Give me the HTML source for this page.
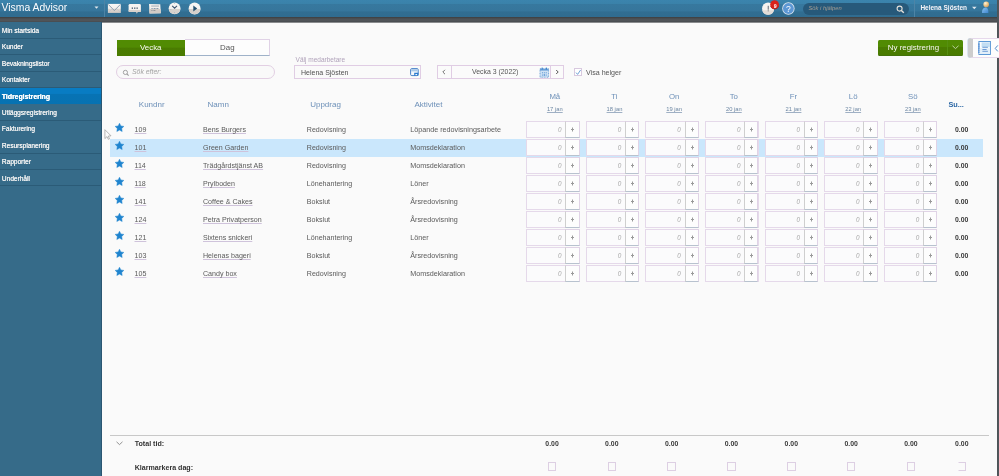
<!DOCTYPE html>
<html><head><meta charset="utf-8">
<style>
*{box-sizing:border-box;margin:0;padding:0}
html,body{width:999px;height:476px;overflow:hidden;background:#fafafa;font-family:"Liberation Sans",sans-serif;position:relative}
.abs{position:absolute}
#hdr{left:0;top:0;width:999px;height:17px;background:linear-gradient(#3b84ad 0,#3a82aa 3.5px,#37789e 4px,#36769c 11px,#316e92 11.8px,#306c90 17px)}
#band{left:0;top:17px;width:999px;height:5.5px;background:linear-gradient(#3f4143 0,#434547 1px,#4e5256 1.8px,#505458 3.5px,#4a4e52 4.5px,#474b4f 5px,#8a8c8e 5.5px)}
#side{left:0;top:22px;width:102px;height:454px;background:#366b89}
#side .it{position:absolute;left:0;width:102px;height:16.4px;color:#f2f2f2;font-size:6.5px;font-weight:normal;text-shadow:0.3px 0 0 #f2f2f2;letter-spacing:0.02px;line-height:18px;padding-left:1.8px;white-space:nowrap}
#side .it.act{background:linear-gradient(#087cc3 0,#087cc3 34%,#0773b4 38%,#0772b2 100%);font-size:6.8px;font-weight:bold;text-shadow:0.25px 0 0 #fff;color:#fff}
#rborder{left:996.5px;top:0;width:3px;height:476px;background:linear-gradient(90deg,#4c5256,#52585c 60%,#585e62)}
.t{position:absolute;white-space:nowrap;line-height:1}
body{will-change:transform}
.seg{position:absolute;top:39.5px;height:16px;font-size:7.6px;line-height:16px;text-align:center}
.lnk{color:#5c7cab;text-decoration:underline;text-decoration-skip-ink:none;text-decoration-color:#cfc3db}
.cell{position:absolute;font-size:7.1px;color:#5a5a5a;white-space:nowrap;line-height:1}
.dh{position:absolute;font-size:7.8px;color:#6d90b8;text-align:center;width:40px;line-height:1}
.dd{position:absolute;font-size:5.8px;color:#6d87a3;text-align:center;width:40px;line-height:1;text-decoration:underline;text-decoration-skip-ink:none;text-decoration-color:#9fb0c4}
.box{position:absolute;width:53.5px;height:16.6px;border:1px solid #e5d9ea;background:#fbfbfc}
.box .z{position:absolute;right:17.1px;top:4.6px;font-size:6.3px;font-style:italic;color:#a9a9a9;line-height:1}
.box .p{position:absolute;left:38.2px;top:-1px;width:14.3px;height:16.6px;border:1px solid #e0d3e6;border-left:1px solid #cfcfcf;border-bottom:1px solid #b8c2cf;background:#fdfdfd;font-size:7.5px;color:#666;text-align:center;line-height:15.5px}
.sum{position:absolute;font-size:6.9px;font-weight:bold;color:#3a3a3a;line-height:1;white-space:nowrap}
.ck{position:absolute;width:8.5px;height:8.5px;border:1px solid #ddcfe3;background:#fafafa}
</style></head><body>

<div id="hdr" class="abs">
  <div class="t" style="left:1.5px;top:2.9px;font-size:10.4px;color:#fafcfe">Visma Advisor</div>
  <svg class="abs" style="left:93px;top:5px" width="7" height="5"><path d="M1.5 1.5 L5.5 1.5 L3.5 3.8Z" fill="#dfe7ee"/></svg>
  <div class="abs" style="left:104px;top:0;width:1px;height:17px;background:#4d84a6"></div>
  <svg class="abs" style="left:106px;top:2px" width="100" height="14">
    <defs><linearGradient id="gEnv" x1="0" y1="0" x2="0" y2="1"><stop offset="0" stop-color="#fbf8f6"/><stop offset="0.5" stop-color="#f3efec"/><stop offset="0.55" stop-color="#ddd6d0"/><stop offset="1" stop-color="#d3cbc4"/></linearGradient></defs>
    <rect x="1.9" y="1.9" width="12.9" height="9" fill="url(#gEnv)"/>
    <path d="M2.3 2.4 L8.35 8.6 L14.4 2.4" fill="none" stroke="#8296ac" stroke-width="0.9"/>
    <path d="M2.3 10.6 L6.3 6.6 M14.4 10.6 L10.4 6.6" fill="none" stroke="#b9c3ce" stroke-width="0.6"/>
    <rect x="22.6" y="1.9" width="12.3" height="8.1" rx="1.4" fill="#f6f3f1"/>
    <rect x="22.6" y="7.9" width="12.3" height="2.1" fill="#d8d1cb"/>
    <path d="M30 9.9 L30.8 11.8 L31.8 9.9Z" fill="#d0c9c3"/>
    <rect x="25.7" y="5.5" width="1.3" height="1.3" fill="#3e5268"/>
    <rect x="28.1" y="5.5" width="1.3" height="1.3" fill="#3e5268"/>
    <rect x="30.5" y="5.5" width="1.3" height="1.3" fill="#3e5268"/>
    <path d="M43 1.9 L54.3 2.2 L54.8 11.3 L43.5 11.5Z" fill="#f3f0ed"/>
    <path d="M43.2 7 L54.6 6.9 L54.8 11.3 L43.5 11.5Z" fill="#d2cbc5"/>
    <rect x="45.2" y="3.6" width="7.8" height="0.9" fill="#9aa4b0"/>
    <rect x="45.4" y="6" width="1.3" height="0.9" fill="#7e8fa2"/>
    <rect x="47.6" y="6" width="2" height="0.9" fill="#7e8fa2"/>
    <rect x="50.4" y="6" width="2" height="0.9" fill="#7e8fa2"/>
    <rect x="45.4" y="8.1" width="1.1" height="0.9" fill="#8b8f96"/>
    <rect x="47.4" y="8.1" width="2" height="0.9" fill="#8b8f96"/>
    <circle cx="68.6" cy="6.3" r="5.9" fill="#f6f4f2"/>
    <path d="M62.76 7 A5.9 5.9 0 0 0 74.44 7Z" fill="#d6d1cc"/>
    <path d="M66.2 3.9 L68.6 6.2 L71 3.9" fill="none" stroke="#3d5570" stroke-width="1.1"/>
    <circle cx="68.6" cy="1.4" r="0.45" fill="#8a96a3"/>
    <circle cx="64.9" cy="7.6" r="0.4" fill="#8a9cb8"/>
    <circle cx="68.6" cy="10.4" r="0.4" fill="#8a9cb8"/>
    <circle cx="88.6" cy="6.5" r="5.95" fill="#f7f5f3"/>
    <path d="M82.7 7 A5.95 5.95 0 0 0 94.5 7Z" fill="#d4cfca"/>
    <path d="M87.3 3.4 L91.2 6.4 L87.3 9.4Z" fill="#24506f"/>
  </svg>
  <svg class="abs" style="left:760px;top:0" width="40" height="17">
    <circle cx="8.1" cy="8.6" r="6.1" fill="#f5f2f0"/>
    <path d="M2.2 10.2 A6.1 6.1 0 0 0 14 10.2Z" fill="#e2dcd7"/>
    <rect x="7.75" y="5.8" width="0.9" height="3.9" fill="#4e5a66"/>
    <rect x="7.75" y="10.4" width="0.9" height="0.9" fill="#4e5a66"/>
    <circle cx="14.6" cy="4.6" r="4.4" fill="#d8221c"/>
    <path d="M10.5 6.2 A4.4 4.4 0 0 0 18.7 6.2" fill="none" stroke="#b31a14" stroke-width="0.8"/>
    <text x="15.3" y="7.6" font-size="5.2" font-weight="bold" text-anchor="middle" fill="#fff" font-family="Liberation Sans">9</text>
    <circle cx="28.4" cy="8.5" r="6.2" fill="#dde6ee"/>
    <circle cx="28.4" cy="8.5" r="5.4" fill="#5c97d4"/>
    <text x="28.5" y="12.4" font-size="8.6" text-anchor="middle" fill="#fff" font-family="Liberation Sans">?</text>
  </svg>
  <div class="abs" style="left:803.2px;top:3.2px;width:106px;height:11.4px;border-radius:6px;background:#27597a"></div>
  <div class="t" style="left:808.5px;top:6.2px;font-size:5.8px;color:#a39c92;font-style:italic">Sök i hjälpen</div>
  <svg class="abs" style="left:896px;top:4.5px" width="9" height="9"><circle cx="3.6" cy="3.6" r="2.5" fill="none" stroke="#e6e2dc" stroke-width="1.1"/><path d="M5.4 5.4 L7.8 7.8" stroke="#e6e2dc" stroke-width="1.4"/></svg>
  <div class="abs" style="left:914px;top:0;width:1px;height:17px;background:#4d84a6"></div>
  <div class="t" style="left:920.4px;top:5.1px;font-size:6.5px;font-weight:bold;color:#f6f4f8">Helena Sjösten</div>
  <svg class="abs" style="left:971px;top:6px" width="7" height="4"><path d="M1 0.8 L5.6 0.8 L3.3 3.2Z" fill="#dfe7ee"/></svg>
  <svg class="abs" style="left:980px;top:0" width="12" height="15">
    <defs><radialGradient id="gHead" cx="0.35" cy="0.3" r="0.8"><stop offset="0" stop-color="#fff2d8"/><stop offset="0.5" stop-color="#f0c88a"/><stop offset="1" stop-color="#c89458"/></radialGradient>
    <linearGradient id="gBody" x1="0" y1="0" x2="1" y2="1"><stop offset="0" stop-color="#8cc4f0"/><stop offset="1" stop-color="#3f86d0"/></linearGradient></defs>
    <circle cx="6.2" cy="4.4" r="2.8" fill="url(#gHead)"/>
    <path d="M2 13 Q1.8 7.6 5.6 7.4 Q8.6 7.4 8.4 13Z" fill="url(#gBody)"/>
  </svg>
</div>
<div id="band" class="abs"></div>

<div id="side" class="abs">
<div class="abs" style="left:0;top:15.80px;width:102px;height:1px;background:#2b5b77"></div>
<div class="abs" style="left:0;top:32.20px;width:102px;height:1px;background:#2b5b77"></div>
<div class="abs" style="left:0;top:48.60px;width:102px;height:1px;background:#2b5b77"></div>
<div class="abs" style="left:0;top:65.00px;width:102px;height:1px;background:#2b5b77"></div>
<div class="abs" style="left:0;top:81.40px;width:102px;height:1px;background:#2b5b77"></div>
<div class="abs" style="left:0;top:97.80px;width:102px;height:1px;background:#2b5b77"></div>
<div class="abs" style="left:0;top:130.60px;width:102px;height:1px;background:#2b5b77"></div>
<div class="abs" style="left:0;top:147.00px;width:102px;height:1px;background:#2b5b77"></div>
<div class="abs" style="left:0;top:163.40px;width:102px;height:1px;background:#2b5b77"></div>
<div class="it" style="top:0.00px">Min startsida</div>
<div class="it" style="top:16.40px">Kunder</div>
<div class="it" style="top:32.80px">Bevakningslistor</div>
<div class="it" style="top:49.20px">Kontakter</div>
<div class="it act" style="top:66.00px">Tidregistrering</div>
<div class="it" style="top:82.00px">Utläggsregistrering</div>
<div class="it" style="top:98.40px">Fakturering</div>
<div class="it" style="top:114.80px">Resursplanering</div>
<div class="it" style="top:131.20px">Rapporter</div>
<div class="it" style="top:147.60px">Underhåll</div>
</div>
<div class="seg" style="left:116.5px;width:68.5px;background:linear-gradient(#518b03 0,#518b03 45%,#4a7c01 50%,#497b00 100%);color:#fbfbf6;font-size:7.9px">Vecka</div>
<div class="seg" style="left:185px;width:84.6px;top:39.2px;height:16.5px;background:#fdfdfd;border:1px solid #e0d2e6;border-left:none;border-bottom:1px solid #9fb2c9;color:#555;font-size:7.9px;line-height:16.2px;padding-left:1px">Dag</div>
<div class="abs" style="left:116px;top:65.3px;width:159px;height:13.6px;border:1px solid #e2cfe3;border-radius:7px;background:#f9f9f9"></div>
<svg class="abs" style="left:121.5px;top:68.5px" width="8" height="8"><circle cx="3.4" cy="3.4" r="2.1" fill="none" stroke="#999" stroke-width="0.9"/><path d="M4.9 4.9 L6.6 6.6" stroke="#999" stroke-width="1.1"/></svg>
<div class="t" style="left:132px;top:68.8px;font-size:6.9px;font-style:italic;color:#a4a4a4">Sök efter:</div>
<div class="t" style="left:295.6px;top:57.4px;font-size:6.5px;color:#b0a2ba">Välj medarbetare</div>
<div class="abs" style="left:294.2px;top:65.1px;width:127px;height:13.6px;border:1px solid #e0cde4;background:#fafafa"></div>
<div class="t" style="left:301px;top:69.2px;font-size:7px;color:#505050">Helena Sjösten</div>
<svg class="abs" style="left:409px;top:67px" width="11" height="10"><rect x="1.6" y="1.6" width="7.6" height="7" rx="1.2" fill="#f4f8fc" stroke="#4a82c8" stroke-width="1"/><rect x="2.2" y="2.2" width="6.4" height="2.2" fill="#a9c8e8"/><path d="M5.8 8.8 V6.3 H8.8 V8.8" fill="none" stroke="#2a7ad0" stroke-width="1.2"/></svg>
<div class="abs" style="left:437.4px;top:65px;width:126.2px;height:13.6px;border:1px solid #e0cde4;background:#fbfbfb"></div>
<div class="abs" style="left:451.4px;top:65px;width:1px;height:13.6px;background:#e0cde4"></div>
<div class="abs" style="left:550px;top:65px;width:1px;height:13.6px;background:#e0cde4"></div>
<svg class="abs" style="left:440px;top:68px" width="8" height="8"><path d="M5 1.8 L2.8 4 L5 6.2" fill="none" stroke="#666" stroke-width="0.9"/></svg>
<svg class="abs" style="left:553px;top:68px" width="8" height="8"><path d="M3.2 2 L5.2 4 L3.2 6" fill="none" stroke="#555" stroke-width="1"/></svg>
<div class="t" style="left:472px;top:69.3px;font-size:6.9px;color:#555">Vecka 3 (2022)</div>
<svg class="abs" style="left:538.5px;top:66.5px" width="11" height="11"><rect x="1" y="1.8" width="8.6" height="8.4" fill="#cfe2f4" stroke="#5b95d2" stroke-width="0.8" stroke-dasharray="1 0.6"/><rect x="1" y="1.8" width="8.6" height="1.8" fill="#6aa0d8"/><rect x="2.6" y="0.6" width="1.2" height="2" fill="#3f84cc"/><rect x="6.8" y="0.6" width="1.2" height="2" fill="#3f84cc"/><circle cx="3.4" cy="5.8" r="0.55" fill="#3f84cc"/><circle cx="5.3" cy="5.8" r="0.55" fill="#3f84cc"/><circle cx="7.2" cy="5.8" r="0.55" fill="#3f84cc"/><circle cx="3.4" cy="8" r="0.55" fill="#3f84cc"/><circle cx="5.3" cy="8" r="0.7" fill="#2a78c8"/><circle cx="7.2" cy="8" r="0.55" fill="#3f84cc"/></svg>
<div class="abs" style="left:574px;top:68.4px;width:7.6px;height:7.6px;border:1px solid #d8c9df;background:#fff"></div>
<svg class="abs" style="left:574px;top:68px" width="9" height="9"><path d="M2 4.6 L3.6 6.4 L6.6 2" fill="none" stroke="#4f8ccc" stroke-width="0.8"/></svg>
<div class="t" style="left:586px;top:69.6px;font-size:7.1px;color:#555">Visa helger</div>
<div class="abs" style="left:878.4px;top:39.8px;width:84.6px;height:15.9px;border-radius:1.5px;background:linear-gradient(#518b03 0,#518b03 45%,#4a7c01 50%,#497b00 100%);border-bottom:1px solid #44720a"></div>
<div class="abs" style="left:946.8px;top:40px;width:1px;height:15px;background:#568f12"></div>
<div class="t" style="left:887.8px;top:44.4px;font-size:7.9px;color:#f8f8f2">Ny registrering</div>
<svg class="abs" style="left:951px;top:44px" width="9" height="7"><path d="M1.5 1.8 L4.5 4.6 L7.5 1.8" fill="none" stroke="#d8e6c8" stroke-width="0.8"/></svg>
<div class="t" style="left:138.8px;top:101px;font-size:8px;color:#6d90b8">Kundnr</div>
<div class="t" style="left:207.6px;top:101px;font-size:8px;color:#6d90b8">Namn</div>
<div class="t" style="left:310.2px;top:101px;font-size:8px;color:#6d90b8">Uppdrag</div>
<div class="t" style="left:414.4px;top:101px;font-size:8px;color:#6d90b8">Aktivitet</div>
<div class="dh" style="left:534.80px;top:92.5px">Må</div>
<div class="dd" style="left:534.80px;top:107px">17 jan</div>
<div class="dh" style="left:594.48px;top:92.5px">Ti</div>
<div class="dd" style="left:594.48px;top:107px">18 jan</div>
<div class="dh" style="left:654.16px;top:92.5px">On</div>
<div class="dd" style="left:654.16px;top:107px">19 jan</div>
<div class="dh" style="left:713.84px;top:92.5px">To</div>
<div class="dd" style="left:713.84px;top:107px">20 jan</div>
<div class="dh" style="left:773.52px;top:92.5px">Fr</div>
<div class="dd" style="left:773.52px;top:107px">21 jan</div>
<div class="dh" style="left:833.20px;top:92.5px">Lö</div>
<div class="dd" style="left:833.20px;top:107px">22 jan</div>
<div class="dh" style="left:892.88px;top:92.5px">Sö</div>
<div class="dd" style="left:892.88px;top:107px">23 jan</div>
<div class="t" style="left:948.4px;top:100.8px;font-size:7.3px;font-weight:bold;color:#2a66a4">Su...</div>
<svg class="abs" style="left:114px;top:121.90px" width="11" height="11"><path d="M5.50 1.25 L6.85 3.94 L9.83 4.39 L7.69 6.51 L8.17 9.48 L5.50 8.10 L2.83 9.48 L3.31 6.51 L1.17 4.39 L4.15 3.94Z" stroke="#1f84cf" stroke-width="0.5" stroke-linejoin="round" fill="#1f84cf"/></svg>
<div class="cell lnk" style="left:134.5px;top:126.90px">109</div>
<div class="cell lnk" style="left:203px;top:126.90px">Bens Burgers</div>
<div class="cell" style="left:306.8px;top:126.90px">Redovisning</div>
<div class="cell" style="left:410.2px;top:125.90px;font-size:7.2px">Löpande redovisningsarbete</div>
<div class="box" style="left:526.20px;top:121.30px"><span class="z">0</span><div class="p"></div></div>
<div class="box" style="left:585.80px;top:121.30px"><span class="z">0</span><div class="p"></div></div>
<div class="box" style="left:645.40px;top:121.30px"><span class="z">0</span><div class="p"></div></div>
<div class="box" style="left:705.00px;top:121.30px"><span class="z">0</span><div class="p"></div></div>
<div class="box" style="left:764.60px;top:121.30px"><span class="z">0</span><div class="p"></div></div>
<div class="box" style="left:824.20px;top:121.30px"><span class="z">0</span><div class="p"></div></div>
<div class="box" style="left:883.80px;top:121.30px"><span class="z">0</span><div class="p"></div></div>
<div class="sum" style="left:955px;top:127.20px">0.00</div>
<div class="abs" style="left:110px;top:138.80px;width:873px;height:18.0px;background:#cae7fc"></div>
<svg class="abs" style="left:114px;top:139.90px" width="11" height="11"><path d="M5.50 1.25 L6.85 3.94 L9.83 4.39 L7.69 6.51 L8.17 9.48 L5.50 8.10 L2.83 9.48 L3.31 6.51 L1.17 4.39 L4.15 3.94Z" stroke="#1f84cf" stroke-width="0.5" stroke-linejoin="round" fill="#1f84cf"/></svg>
<div class="cell lnk" style="left:134.5px;top:144.90px">101</div>
<div class="cell lnk" style="left:203px;top:144.90px">Green Garden</div>
<div class="cell" style="left:306.8px;top:144.90px">Redovisning</div>
<div class="cell" style="left:410.2px;top:143.90px;font-size:7.2px">Momsdeklaration</div>
<div class="box" style="left:526.20px;top:139.30px"><span class="z">0</span><div class="p"></div></div>
<div class="box" style="left:585.80px;top:139.30px"><span class="z">0</span><div class="p"></div></div>
<div class="box" style="left:645.40px;top:139.30px"><span class="z">0</span><div class="p"></div></div>
<div class="box" style="left:705.00px;top:139.30px"><span class="z">0</span><div class="p"></div></div>
<div class="box" style="left:764.60px;top:139.30px"><span class="z">0</span><div class="p"></div></div>
<div class="box" style="left:824.20px;top:139.30px"><span class="z">0</span><div class="p"></div></div>
<div class="box" style="left:883.80px;top:139.30px"><span class="z">0</span><div class="p"></div></div>
<div class="sum" style="left:955px;top:145.20px">0.00</div>
<svg class="abs" style="left:114px;top:157.90px" width="11" height="11"><path d="M5.50 1.25 L6.85 3.94 L9.83 4.39 L7.69 6.51 L8.17 9.48 L5.50 8.10 L2.83 9.48 L3.31 6.51 L1.17 4.39 L4.15 3.94Z" stroke="#1f84cf" stroke-width="0.5" stroke-linejoin="round" fill="#1f84cf"/></svg>
<div class="cell lnk" style="left:134.5px;top:162.90px">114</div>
<div class="cell lnk" style="left:203px;top:162.90px">Trädgårdstjänst AB</div>
<div class="cell" style="left:306.8px;top:162.90px">Redovisning</div>
<div class="cell" style="left:410.2px;top:161.90px;font-size:7.2px">Momsdeklaration</div>
<div class="box" style="left:526.20px;top:157.30px"><span class="z">0</span><div class="p"></div></div>
<div class="box" style="left:585.80px;top:157.30px"><span class="z">0</span><div class="p"></div></div>
<div class="box" style="left:645.40px;top:157.30px"><span class="z">0</span><div class="p"></div></div>
<div class="box" style="left:705.00px;top:157.30px"><span class="z">0</span><div class="p"></div></div>
<div class="box" style="left:764.60px;top:157.30px"><span class="z">0</span><div class="p"></div></div>
<div class="box" style="left:824.20px;top:157.30px"><span class="z">0</span><div class="p"></div></div>
<div class="box" style="left:883.80px;top:157.30px"><span class="z">0</span><div class="p"></div></div>
<div class="sum" style="left:955px;top:163.20px">0.00</div>
<svg class="abs" style="left:114px;top:175.90px" width="11" height="11"><path d="M5.50 1.25 L6.85 3.94 L9.83 4.39 L7.69 6.51 L8.17 9.48 L5.50 8.10 L2.83 9.48 L3.31 6.51 L1.17 4.39 L4.15 3.94Z" stroke="#1f84cf" stroke-width="0.5" stroke-linejoin="round" fill="#1f84cf"/></svg>
<div class="cell lnk" style="left:134.5px;top:180.90px">118</div>
<div class="cell lnk" style="left:203px;top:180.90px">Prylboden</div>
<div class="cell" style="left:306.8px;top:180.90px">Lönehantering</div>
<div class="cell" style="left:410.2px;top:179.90px;font-size:7.2px">Löner</div>
<div class="box" style="left:526.20px;top:175.30px"><span class="z">0</span><div class="p"></div></div>
<div class="box" style="left:585.80px;top:175.30px"><span class="z">0</span><div class="p"></div></div>
<div class="box" style="left:645.40px;top:175.30px"><span class="z">0</span><div class="p"></div></div>
<div class="box" style="left:705.00px;top:175.30px"><span class="z">0</span><div class="p"></div></div>
<div class="box" style="left:764.60px;top:175.30px"><span class="z">0</span><div class="p"></div></div>
<div class="box" style="left:824.20px;top:175.30px"><span class="z">0</span><div class="p"></div></div>
<div class="box" style="left:883.80px;top:175.30px"><span class="z">0</span><div class="p"></div></div>
<div class="sum" style="left:955px;top:181.20px">0.00</div>
<svg class="abs" style="left:114px;top:193.90px" width="11" height="11"><path d="M5.50 1.25 L6.85 3.94 L9.83 4.39 L7.69 6.51 L8.17 9.48 L5.50 8.10 L2.83 9.48 L3.31 6.51 L1.17 4.39 L4.15 3.94Z" stroke="#1f84cf" stroke-width="0.5" stroke-linejoin="round" fill="#1f84cf"/></svg>
<div class="cell lnk" style="left:134.5px;top:198.90px">141</div>
<div class="cell lnk" style="left:203px;top:198.90px">Coffee &amp; Cakes</div>
<div class="cell" style="left:306.8px;top:198.90px">Bokslut</div>
<div class="cell" style="left:410.2px;top:197.90px;font-size:7.2px">Årsredovisning</div>
<div class="box" style="left:526.20px;top:193.30px"><span class="z">0</span><div class="p"></div></div>
<div class="box" style="left:585.80px;top:193.30px"><span class="z">0</span><div class="p"></div></div>
<div class="box" style="left:645.40px;top:193.30px"><span class="z">0</span><div class="p"></div></div>
<div class="box" style="left:705.00px;top:193.30px"><span class="z">0</span><div class="p"></div></div>
<div class="box" style="left:764.60px;top:193.30px"><span class="z">0</span><div class="p"></div></div>
<div class="box" style="left:824.20px;top:193.30px"><span class="z">0</span><div class="p"></div></div>
<div class="box" style="left:883.80px;top:193.30px"><span class="z">0</span><div class="p"></div></div>
<div class="sum" style="left:955px;top:199.20px">0.00</div>
<svg class="abs" style="left:114px;top:211.90px" width="11" height="11"><path d="M5.50 1.25 L6.85 3.94 L9.83 4.39 L7.69 6.51 L8.17 9.48 L5.50 8.10 L2.83 9.48 L3.31 6.51 L1.17 4.39 L4.15 3.94Z" stroke="#1f84cf" stroke-width="0.5" stroke-linejoin="round" fill="#1f84cf"/></svg>
<div class="cell lnk" style="left:134.5px;top:216.90px">124</div>
<div class="cell lnk" style="left:203px;top:216.90px">Petra Privatperson</div>
<div class="cell" style="left:306.8px;top:216.90px">Bokslut</div>
<div class="cell" style="left:410.2px;top:215.90px;font-size:7.2px">Årsredovisning</div>
<div class="box" style="left:526.20px;top:211.30px"><span class="z">0</span><div class="p"></div></div>
<div class="box" style="left:585.80px;top:211.30px"><span class="z">0</span><div class="p"></div></div>
<div class="box" style="left:645.40px;top:211.30px"><span class="z">0</span><div class="p"></div></div>
<div class="box" style="left:705.00px;top:211.30px"><span class="z">0</span><div class="p"></div></div>
<div class="box" style="left:764.60px;top:211.30px"><span class="z">0</span><div class="p"></div></div>
<div class="box" style="left:824.20px;top:211.30px"><span class="z">0</span><div class="p"></div></div>
<div class="box" style="left:883.80px;top:211.30px"><span class="z">0</span><div class="p"></div></div>
<div class="sum" style="left:955px;top:217.20px">0.00</div>
<svg class="abs" style="left:114px;top:229.90px" width="11" height="11"><path d="M5.50 1.25 L6.85 3.94 L9.83 4.39 L7.69 6.51 L8.17 9.48 L5.50 8.10 L2.83 9.48 L3.31 6.51 L1.17 4.39 L4.15 3.94Z" stroke="#1f84cf" stroke-width="0.5" stroke-linejoin="round" fill="#1f84cf"/></svg>
<div class="cell lnk" style="left:134.5px;top:234.90px">121</div>
<div class="cell lnk" style="left:203px;top:234.90px">Sixtens snickeri</div>
<div class="cell" style="left:306.8px;top:234.90px">Lönehantering</div>
<div class="cell" style="left:410.2px;top:233.90px;font-size:7.2px">Löner</div>
<div class="box" style="left:526.20px;top:229.30px"><span class="z">0</span><div class="p"></div></div>
<div class="box" style="left:585.80px;top:229.30px"><span class="z">0</span><div class="p"></div></div>
<div class="box" style="left:645.40px;top:229.30px"><span class="z">0</span><div class="p"></div></div>
<div class="box" style="left:705.00px;top:229.30px"><span class="z">0</span><div class="p"></div></div>
<div class="box" style="left:764.60px;top:229.30px"><span class="z">0</span><div class="p"></div></div>
<div class="box" style="left:824.20px;top:229.30px"><span class="z">0</span><div class="p"></div></div>
<div class="box" style="left:883.80px;top:229.30px"><span class="z">0</span><div class="p"></div></div>
<div class="sum" style="left:955px;top:235.20px">0.00</div>
<svg class="abs" style="left:114px;top:247.90px" width="11" height="11"><path d="M5.50 1.25 L6.85 3.94 L9.83 4.39 L7.69 6.51 L8.17 9.48 L5.50 8.10 L2.83 9.48 L3.31 6.51 L1.17 4.39 L4.15 3.94Z" stroke="#1f84cf" stroke-width="0.5" stroke-linejoin="round" fill="#1f84cf"/></svg>
<div class="cell lnk" style="left:134.5px;top:252.90px">103</div>
<div class="cell lnk" style="left:203px;top:252.90px">Helenas bageri</div>
<div class="cell" style="left:306.8px;top:252.90px">Bokslut</div>
<div class="cell" style="left:410.2px;top:251.90px;font-size:7.2px">Årsredovisning</div>
<div class="box" style="left:526.20px;top:247.30px"><span class="z">0</span><div class="p"></div></div>
<div class="box" style="left:585.80px;top:247.30px"><span class="z">0</span><div class="p"></div></div>
<div class="box" style="left:645.40px;top:247.30px"><span class="z">0</span><div class="p"></div></div>
<div class="box" style="left:705.00px;top:247.30px"><span class="z">0</span><div class="p"></div></div>
<div class="box" style="left:764.60px;top:247.30px"><span class="z">0</span><div class="p"></div></div>
<div class="box" style="left:824.20px;top:247.30px"><span class="z">0</span><div class="p"></div></div>
<div class="box" style="left:883.80px;top:247.30px"><span class="z">0</span><div class="p"></div></div>
<div class="sum" style="left:955px;top:253.20px">0.00</div>
<svg class="abs" style="left:114px;top:265.90px" width="11" height="11"><path d="M5.50 1.25 L6.85 3.94 L9.83 4.39 L7.69 6.51 L8.17 9.48 L5.50 8.10 L2.83 9.48 L3.31 6.51 L1.17 4.39 L4.15 3.94Z" stroke="#1f84cf" stroke-width="0.5" stroke-linejoin="round" fill="#1f84cf"/></svg>
<div class="cell lnk" style="left:134.5px;top:270.90px">105</div>
<div class="cell lnk" style="left:203px;top:270.90px">Candy box</div>
<div class="cell" style="left:306.8px;top:270.90px">Redovisning</div>
<div class="cell" style="left:410.2px;top:269.90px;font-size:7.2px">Momsdeklaration</div>
<div class="box" style="left:526.20px;top:265.30px"><span class="z">0</span><div class="p"></div></div>
<div class="box" style="left:585.80px;top:265.30px"><span class="z">0</span><div class="p"></div></div>
<div class="box" style="left:645.40px;top:265.30px"><span class="z">0</span><div class="p"></div></div>
<div class="box" style="left:705.00px;top:265.30px"><span class="z">0</span><div class="p"></div></div>
<div class="box" style="left:764.60px;top:265.30px"><span class="z">0</span><div class="p"></div></div>
<div class="box" style="left:824.20px;top:265.30px"><span class="z">0</span><div class="p"></div></div>
<div class="box" style="left:883.80px;top:265.30px"><span class="z">0</span><div class="p"></div></div>
<div class="sum" style="left:955px;top:271.20px">0.00</div>
<svg class="abs" style="left:0;top:0" width="999" height="476"><path d="M572.5 127.5 V131.5 M571.0 129.5 H574.0 M632.5 127.5 V131.5 M631.0 129.5 H634.0 M692.5 127.5 V131.5 M691.0 129.5 H694.0 M751.5 127.5 V131.5 M750.0 129.5 H753.0 M811.5 127.5 V131.5 M810.0 129.5 H813.0 M870.5 127.5 V131.5 M869.0 129.5 H872.0 M930.5 127.5 V131.5 M929.0 129.5 H932.0 M572.5 145.5 V149.5 M571.0 147.5 H574.0 M632.5 145.5 V149.5 M631.0 147.5 H634.0 M692.5 145.5 V149.5 M691.0 147.5 H694.0 M751.5 145.5 V149.5 M750.0 147.5 H753.0 M811.5 145.5 V149.5 M810.0 147.5 H813.0 M870.5 145.5 V149.5 M869.0 147.5 H872.0 M930.5 145.5 V149.5 M929.0 147.5 H932.0 M572.5 163.5 V167.5 M571.0 165.5 H574.0 M632.5 163.5 V167.5 M631.0 165.5 H634.0 M692.5 163.5 V167.5 M691.0 165.5 H694.0 M751.5 163.5 V167.5 M750.0 165.5 H753.0 M811.5 163.5 V167.5 M810.0 165.5 H813.0 M870.5 163.5 V167.5 M869.0 165.5 H872.0 M930.5 163.5 V167.5 M929.0 165.5 H932.0 M572.5 181.5 V185.5 M571.0 183.5 H574.0 M632.5 181.5 V185.5 M631.0 183.5 H634.0 M692.5 181.5 V185.5 M691.0 183.5 H694.0 M751.5 181.5 V185.5 M750.0 183.5 H753.0 M811.5 181.5 V185.5 M810.0 183.5 H813.0 M870.5 181.5 V185.5 M869.0 183.5 H872.0 M930.5 181.5 V185.5 M929.0 183.5 H932.0 M572.5 199.5 V203.5 M571.0 201.5 H574.0 M632.5 199.5 V203.5 M631.0 201.5 H634.0 M692.5 199.5 V203.5 M691.0 201.5 H694.0 M751.5 199.5 V203.5 M750.0 201.5 H753.0 M811.5 199.5 V203.5 M810.0 201.5 H813.0 M870.5 199.5 V203.5 M869.0 201.5 H872.0 M930.5 199.5 V203.5 M929.0 201.5 H932.0 M572.5 217.5 V221.5 M571.0 219.5 H574.0 M632.5 217.5 V221.5 M631.0 219.5 H634.0 M692.5 217.5 V221.5 M691.0 219.5 H694.0 M751.5 217.5 V221.5 M750.0 219.5 H753.0 M811.5 217.5 V221.5 M810.0 219.5 H813.0 M870.5 217.5 V221.5 M869.0 219.5 H872.0 M930.5 217.5 V221.5 M929.0 219.5 H932.0 M572.5 235.5 V239.5 M571.0 237.5 H574.0 M632.5 235.5 V239.5 M631.0 237.5 H634.0 M692.5 235.5 V239.5 M691.0 237.5 H694.0 M751.5 235.5 V239.5 M750.0 237.5 H753.0 M811.5 235.5 V239.5 M810.0 237.5 H813.0 M870.5 235.5 V239.5 M869.0 237.5 H872.0 M930.5 235.5 V239.5 M929.0 237.5 H932.0 M572.5 253.5 V257.5 M571.0 255.5 H574.0 M632.5 253.5 V257.5 M631.0 255.5 H634.0 M692.5 253.5 V257.5 M691.0 255.5 H694.0 M751.5 253.5 V257.5 M750.0 255.5 H753.0 M811.5 253.5 V257.5 M810.0 255.5 H813.0 M870.5 253.5 V257.5 M869.0 255.5 H872.0 M930.5 253.5 V257.5 M929.0 255.5 H932.0 M572.5 271.5 V275.5 M571.0 273.5 H574.0 M632.5 271.5 V275.5 M631.0 273.5 H634.0 M692.5 271.5 V275.5 M691.0 273.5 H694.0 M751.5 271.5 V275.5 M750.0 273.5 H753.0 M811.5 271.5 V275.5 M810.0 273.5 H813.0 M870.5 271.5 V275.5 M869.0 273.5 H872.0 M930.5 271.5 V275.5 M929.0 273.5 H932.0" stroke="#9a9a9a" stroke-width="1"/></svg>
<div class="abs" style="left:110px;top:435px;width:878.5px;height:1px;background:#c8c8c8"></div>
<svg class="abs" style="left:114.6px;top:440.3px" width="9" height="7"><path d="M1.5 1.8 L4.5 4.6 L7.5 1.8" fill="none" stroke="#777" stroke-width="0.8"/></svg>
<div class="t" style="left:134.7px;top:441.1px;font-size:7.1px;font-weight:bold;color:#333">Total tid:</div>
<div class="t" style="left:134.7px;top:465.4px;font-size:7.1px;font-weight:bold;color:#333">Klarmarkera dag:</div>
<div class="sum" style="left:545.30px;top:441.2px">0.00</div>
<div class="ck" style="left:547.80px;top:462.2px"></div>
<div class="sum" style="left:605.12px;top:441.2px">0.00</div>
<div class="ck" style="left:607.62px;top:462.2px"></div>
<div class="sum" style="left:664.94px;top:441.2px">0.00</div>
<div class="ck" style="left:667.44px;top:462.2px"></div>
<div class="sum" style="left:724.76px;top:441.2px">0.00</div>
<div class="ck" style="left:727.26px;top:462.2px"></div>
<div class="sum" style="left:784.58px;top:441.2px">0.00</div>
<div class="ck" style="left:787.08px;top:462.2px"></div>
<div class="sum" style="left:844.40px;top:441.2px">0.00</div>
<div class="ck" style="left:846.90px;top:462.2px"></div>
<div class="sum" style="left:904.22px;top:441.2px">0.00</div>
<div class="ck" style="left:906.72px;top:462.2px"></div>
<div class="sum" style="left:955.10px;top:441.2px">0.00</div>
<div class="ck" style="left:957.60px;top:462.2px;border-left-color:transparent"></div>
<svg class="abs" style="left:104px;top:129px" width="9" height="12"><path d="M0.9 0.7 L0.9 9.6 L3 7.6 L4.3 10.3 L5.5 9.8 L4.3 7.1 L7 6.8Z" fill="#fbfbfb" stroke="#9a9a9a" stroke-width="0.7" stroke-linejoin="round"/></svg>
<div class="abs" style="left:101.3px;top:22px;width:0.8px;height:454px;background:#2a5672"></div>
<div id="rborder" class="abs"></div>
<div class="abs" style="left:968px;top:38.1px;width:35px;height:19.5px;border:1px solid #e6d9ec;border-radius:3px 0 0 3px;background:#fdfdfd;border-left:5px solid #cdcdcd;box-shadow:-0.6px 0 0 #c9d8e8;z-index:5"></div>
<svg class="abs" style="left:977px;top:40px;z-index:6" width="15" height="16"><rect x="1.9" y="1.5" width="11.5" height="13" fill="#fbfdff" stroke="#4d8fd2" stroke-width="0.9"/><rect x="4.6" y="2.4" width="8.3" height="4.8" fill="#c3def3"/><rect x="2.3" y="8.2" width="10.6" height="5.8" fill="#e3eff9"/><path d="M1.9 3.6 V13" stroke="#3f7fd0" stroke-width="1.4" stroke-dasharray="1.1 0.9"/><path d="M5.4 7.3 H10.9 M5.4 9.5 H9.6 M5.4 11.3 H10.9" stroke="#4f86cc" stroke-width="0.8"/></svg>
<svg class="abs" style="left:993px;top:44px;z-index:6" width="6" height="9"><path d="M4.8 1.4 L2.2 4.4 L4.8 7.4" fill="none" stroke="#4f8ccc" stroke-width="1"/></svg>
</body></html>
